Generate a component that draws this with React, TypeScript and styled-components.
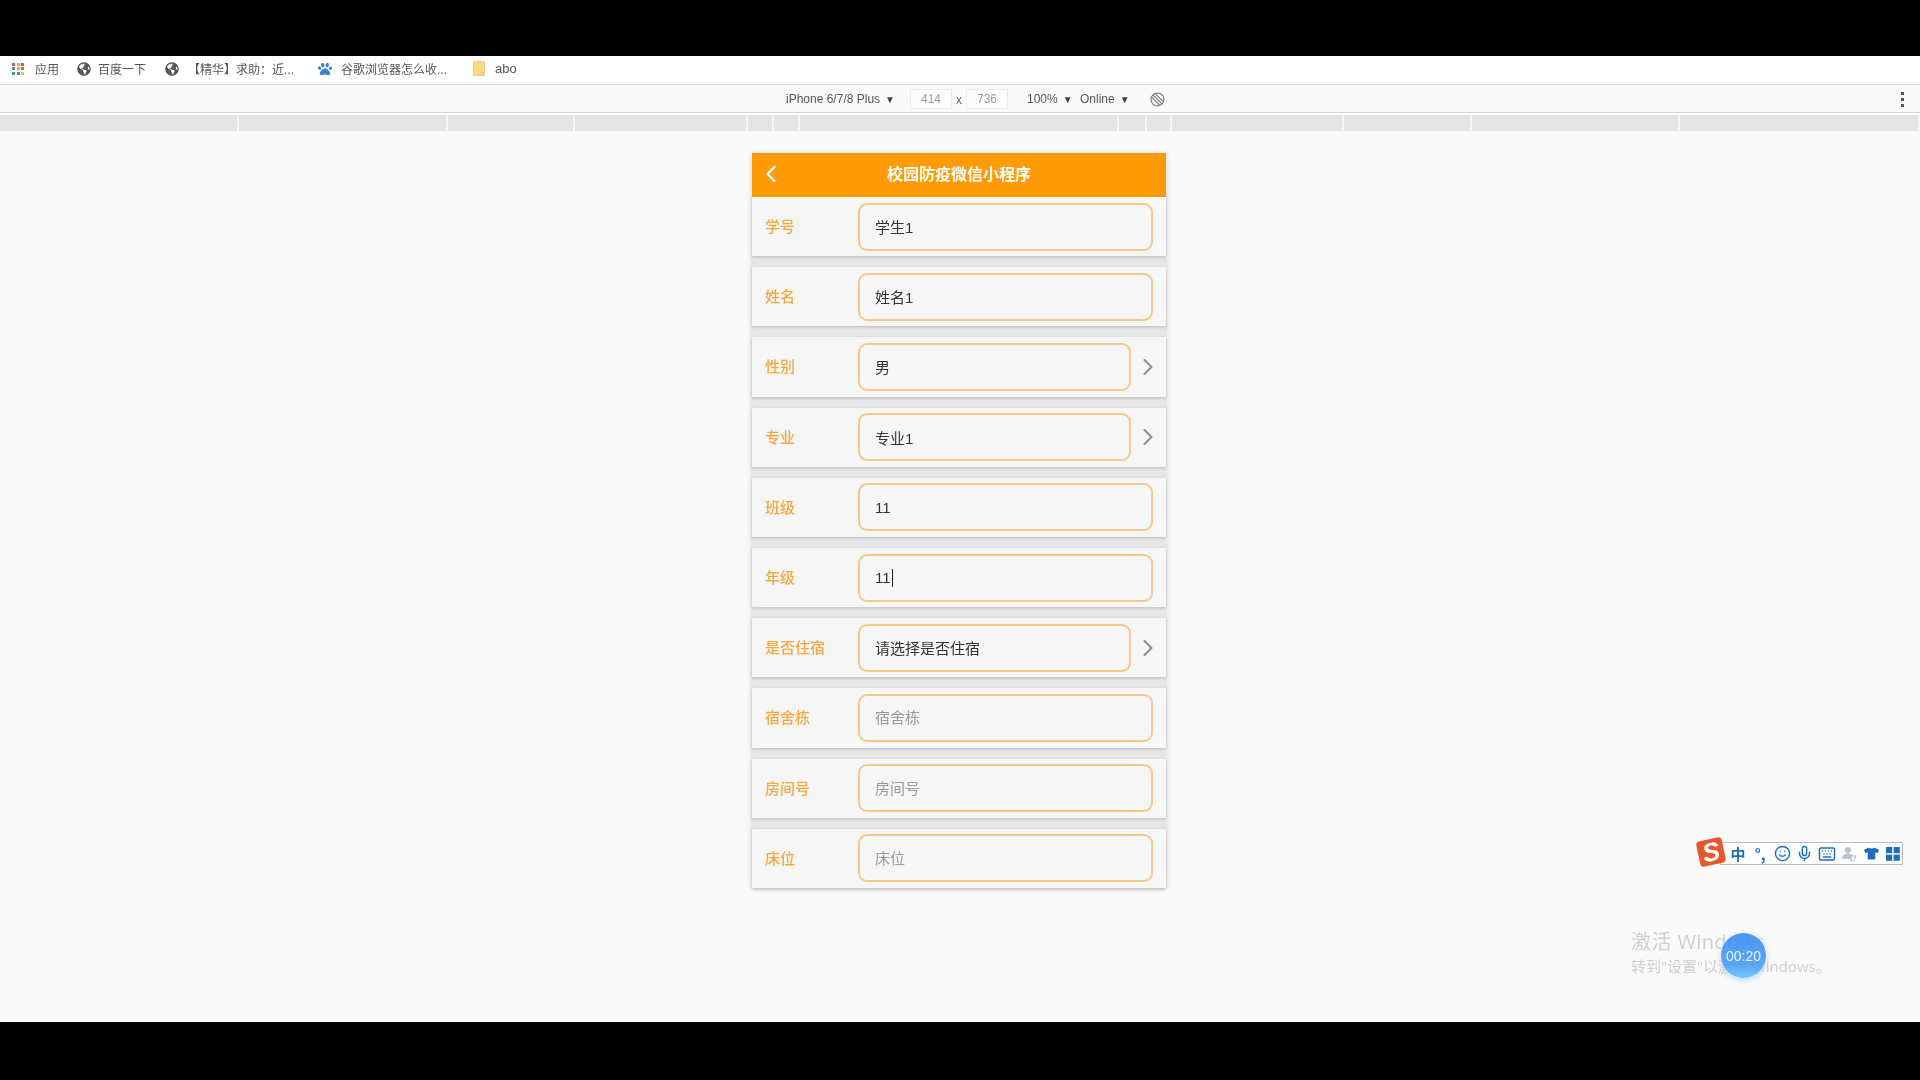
import React from "react";
import styled, { createGlobalStyle } from "styled-components";
import { FaGlobeAmericas, FaTshirt, FaPaw } from "react-icons/fa";
import { Smile, Mic, Keyboard, ChevronLeft, ChevronRight } from "lucide-react";

const Global = createGlobalStyle`
  html, body { margin: 0; padding: 0; background: #000; }
  * { box-sizing: border-box; }
  body { font-family: "Liberation Sans", "Noto Sans CJK SC", sans-serif; }
`;

const Screen = styled.div`
  width: 1920px; height: 1080px; display: flex; flex-direction: column; overflow: hidden; background: #000;
  filter: blur(0.35px);
`;
const Letterbox = styled.div<{ $h: number }>`
  height: ${(p) => p.$h}px; flex: none; background: #000;
`;
const BookmarkBar = styled.div`
  height: 29px; flex: none; background: #fff; border-bottom: 1px solid #dcdcdc;
  display: flex; align-items: center; padding: 0 0 3px 12px; color: #555; font-size: 12px;
`;
const Bookmark = styled.div<{ $w: number; $gap?: number; $size?: number }>`
  width: ${(p) => p.$w}px; flex: none; display: flex; align-items: center; gap: ${(p) => p.$gap ?? 7}px; white-space: nowrap;
  font-size: ${(p) => p.$size ?? 12}px;
  svg { flex: none; }
`;
const AppsGrid = styled.div`
  width: 12px; display: grid; grid-template-columns: repeat(3, 3px); gap: 1.5px; margin-right: 4px;
`;
const AppsDot = styled.span<{ $c: string }>`
  height: 3px; background: ${(p) => p.$c};
`;
const DeviceBar = styled.div`
  height: 28px; flex: none; background: #fafafa; border-bottom: 1px solid #d2d2d2;
  display: flex; align-items: center; padding: 1px 0 0 786px; color: #555; font-size: 12px;
`;
const Dropdown = styled.div<{ $w: number }>`
  width: ${(p) => p.$w}px; flex: none; white-space: nowrap;
`;
const Arrow = styled.span`
  font-size: 10px; margin-left: 5px; color: #444;
`;
const SizeBox = styled.div`
  width: 42px; height: 20px; flex: none; background: #fcfcfc; border: 1px solid #ececec;
  color: #999; display: flex; align-items: center; justify-content: center;
`;
const Times = styled.div`
  width: 14px; flex: none; text-align: center; color: #666; font-size: 12px; padding-top: 2px;
`;
const Spacer = styled.div<{ $w: number }>`
  width: ${(p) => p.$w}px; flex: none;
`;
const MenuDots = styled.div`
  margin-left: auto; margin-right: 16px; display: grid; gap: 3px;
  span { width: 3px; height: 3px; background: #555; display: block; }
`;
const Ruler = styled.div`
  height: 16px; margin-top: 2px; flex: none; display: grid; background: #f6f6f6; column-gap: 2px;
  grid-template-columns: 237px 207px 125px 171px 24px 24px 317px 26px 23px 170px 126px 206px 238px;
  span { background: #e5e5e5; }
`;
const RulerWrap = styled.div`
  flex: none; height: 18px; background: #fdfdfd;
`;
const Viewport = styled.div`
  flex: 1; position: relative; background: #fafafa; padding-top: 22px; display: flex; justify-content: center; align-items: flex-start;
`;
const Phone = styled.div`
  width: 414px; margin-left: -2px; background: #e6e6e6; box-shadow: 0 1px 6px rgba(0, 0, 0, 0.16);
  display: flex; flex-direction: column;
`;
const Header = styled.div`
  height: 44px; background: #ff9c05; color: #fff; position: relative; display: flex; align-items: center; justify-content: center;
  padding-bottom: 5px; font-size: 16px; font-weight: 700; font-family: "Noto Sans CJK SC", sans-serif;
`;
const Back = styled.div`
  position: absolute; left: 5px; top: 7px; height: 26px; display: flex;
`;
const Row = styled.div<{ $last?: boolean }>`
  height: 59.2px; background: #f6f6f6; display: flex; align-items: center; padding: 0 13px;
  margin-bottom: ${(p) => (p.$last ? 0 : 11)}px; box-shadow: 0 1px 3px rgba(0, 0, 0, 0.2);
`;
const Label = styled.div`
  width: 93px; flex: none; color: #f6a93f; font-size: 15px; font-weight: 500; padding-bottom: 2px;
  font-family: "Noto Sans CJK SC", sans-serif;
`;
const Field = styled.div<{ $short?: boolean }>`
  width: ${(p) => (p.$short ? "273px" : "295px")}; height: 48px; flex: none;
  border: 2px solid #f7c88a; border-radius: 9px; padding-left: 15px; display: flex; align-items: center;
  font-size: 15px; color: #333;
`;
const Placeholder = styled.span`
  color: #999; padding-bottom: 2px;
`;
const Caret = styled.span`
  width: 1px; height: 18px; background: #222; margin-left: 1px;
`;
const Chevron = styled.div`
  margin-left: 3px; width: 28px; height: 28px; flex: none; display: flex; align-items: center; justify-content: center; color: #8d8d8d;
  svg { flex: none; }
`;
const Ime = styled.div`
  position: absolute; top: 711px; left: 1720px; width: 183px; height: 23px; background: #fff; border: 1px solid #b9bcc4;
  display: flex; align-items: center; padding-left: 6px; color: #1f6fb8;
`;
const ImeSlot = styled.div`
  width: 22.2px; flex: none; display: flex; align-items: center; justify-content: center; font-size: 15px; font-weight: 700;
  font-family: "Noto Sans CJK SC", sans-serif;
`;
const ImeLogo = styled.div`
  position: absolute; top: 708px; left: 1698px; width: 26px; height: 26px; background: #e8572a; border-radius: 4px; z-index: 1;
  transform: rotate(-12deg); color: #fff; font-size: 26px; font-weight: 700; font-style: italic;
  display: flex; align-items: center; justify-content: center;
`;
const Watermark = styled.div`
  position: absolute; left: 1631px; top: 797px; color: #cfcfcf; white-space: nowrap; font-family: "Open Sans", "Noto Sans CJK SC", sans-serif;
`;
const WatermarkBig = styled.div`
  font-size: 20px; line-height: 28px; letter-spacing: 0.4px;
`;
const WatermarkSmall = styled.div`
  font-size: 15px; line-height: 20px;
`;
const Timer = styled.div`
  position: absolute; left: 1721px; top: 802px; width: 45px; height: 45px; border-radius: 50%;
  background: linear-gradient(180deg, rgba(58, 140, 240, 0.9) 0%, rgba(74, 157, 245, 0.9) 70%, #72c6fa 100%);
  box-shadow: 0 2px 6px rgba(120, 170, 230, 0.45), 0 0 0 1px rgba(255, 255, 255, 0.6);
  color: #e9f3ff; font-size: 14px; display: flex; align-items: center; justify-content: center;
`;

const apps = ["#d9534f", "#e8a33d", "#d9534f", "#4a86d8", "#e8a33d", "#4ea45c", "#4ea45c", "#4a86d8", "#e8c53d"];
const Folder = () => (
  <svg width="12" height="15" viewBox="0 0 12 15">
    <path d="M0.5 0.5H11.5V14.5H0.5Z" fill="#fbdc80" stroke="#ecd08a" />
    <path d="M8 14.5V11.5H11.5" fill="none" stroke="#e5c670" />
  </svg>
);
const Rotate = () => (
  <svg width="15" height="15" viewBox="0 0 15 15" fill="none" stroke="#777" strokeWidth="1.1">
    <circle cx="7.5" cy="7.5" r="6.5" />
    <path d="M3.2 3.2L11.8 11.8M5.2 1.6L13.4 9.8M1.6 5.2L9.8 13.4" />
  </svg>
);
const ImeGrid = () => (
  <svg width="14" height="14" viewBox="0 0 14 14" fill="#1f6fb8">
    <rect width="6.2" height="6.2" /><rect x="7.6" width="6.2" height="6.2" />
    <rect y="7.6" width="6.2" height="6.2" /><rect x="7.6" y="7.6" width="6.2" height="6.2" />
  </svg>
);
const ImeUser = () => (
  <svg width="16" height="16" viewBox="0 0 16 16" fill="#bcc3cb">
    <circle cx="7" cy="4" r="3" /><path d="M1 13c0-4 3-5.500 6-5.500s6 1.500 6 5.500z" />
    <path d="M10 10h5l-2 5h-3z" fill="#fff" stroke="#aab2ba" strokeWidth="0.8" />
  </svg>
);

const rows = [
  { label: "学号", value: "学生1" },
  { label: "姓名", value: "姓名1" },
  { label: "性别", value: "男", select: true },
  { label: "专业", value: "专业1", select: true },
  { label: "班级", value: "11" },
  { label: "年级", value: "11", caret: true },
  { label: "是否住宿", value: "请选择是否住宿", select: true },
  { label: "宿舍栋", placeholder: "宿舍栋" },
  { label: "房间号", placeholder: "房间号" },
  { label: "床位", placeholder: "床位" },
];

export default function App() {
  return (
    <Screen>
      <Global />
      <Letterbox $h={56} />
      <BookmarkBar>
        <Bookmark $w={65}>
          <AppsGrid>{apps.map((c, i) => <AppsDot key={i} $c={c} />)}</AppsGrid>
          应用
        </Bookmark>
        <Bookmark $w={88}><FaGlobeAmericas size={14} color="#555" />百度一下</Bookmark>
        <Bookmark $w={153} $gap={9}><FaGlobeAmericas size={14} color="#555" />【精华】求助：近...</Bookmark>
        <Bookmark $w={155} $gap={9}><FaPaw size={14} color="#3f7fd8" />谷歌浏览器怎么收...</Bookmark>
        <Bookmark $w={60} $gap={10} $size={13}><Folder />abo</Bookmark>
      </BookmarkBar>
      <DeviceBar>
        <Dropdown $w={124}>iPhone 6/7/8 Plus<Arrow>▼</Arrow></Dropdown>
        <SizeBox>414</SizeBox>
        <Times>x</Times>
        <SizeBox>736</SizeBox>
        <Spacer $w={19} />
        <Dropdown $w={53}>100%<Arrow>▼</Arrow></Dropdown>
        <Dropdown $w={70}>Online<Arrow>▼</Arrow></Dropdown>
        <Rotate />
        <MenuDots><span /><span /><span /></MenuDots>
      </DeviceBar>
      <RulerWrap>
        <Ruler>{Array.from({ length: 13 }, (_, i) => <span key={i} />)}</Ruler>
      </RulerWrap>
      <Viewport>
        <Phone>
          <Header>
            <Back><ChevronLeft size={28} strokeWidth={2} /></Back>
            校园防疫微信小程序
          </Header>
          {rows.map((r, i) => (
            <Row key={r.label} $last={i === rows.length - 1}>
              <Label>{r.label}</Label>
              <Field $short={r.select}>
                {r.placeholder ? <Placeholder>{r.placeholder}</Placeholder> : r.value}
                {r.caret && <Caret />}
              </Field>
              {r.select && <Chevron><ChevronRight size={28} strokeWidth={1.8} /></Chevron>}
            </Row>
          ))}
        </Phone>
        <ImeLogo>S</ImeLogo>
        <Ime>
          <ImeSlot>中</ImeSlot>
          <ImeSlot>°,</ImeSlot>
          <ImeSlot><Smile size={17} /></ImeSlot>
          <ImeSlot><Mic size={17} /></ImeSlot>
          <ImeSlot><Keyboard size={18} /></ImeSlot>
          <ImeSlot><ImeUser /></ImeSlot>
          <ImeSlot><FaTshirt size={15} /></ImeSlot>
          <ImeSlot><ImeGrid /></ImeSlot>
        </Ime>
        <Watermark>
          <WatermarkBig>激活 Windows</WatermarkBig>
          <WatermarkSmall>转到"设置"以激活 Windows。</WatermarkSmall>
        </Watermark>
        <Timer>00:20</Timer>
      </Viewport>
      <Letterbox $h={58} />
    </Screen>
  );
}
